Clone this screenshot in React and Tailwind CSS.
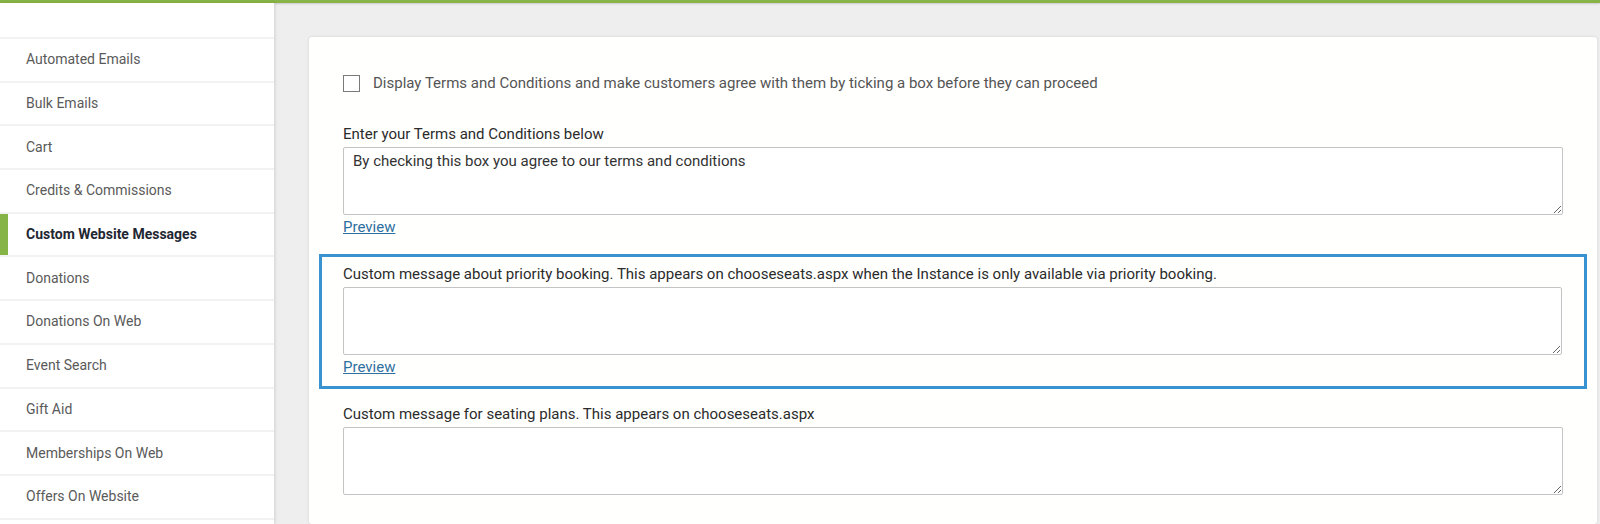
import React from 'react';

const menuItems = [
  'Automated Emails',
  'Bulk Emails',
  'Cart',
  'Credits & Commissions',
  'Custom Website Messages',
  'Donations',
  'Donations On Web',
  'Event Search',
  'Gift Aid',
  'Memberships On Web',
  'Offers On Website',
];

function Field({ label, value = '', preview = true }) {
  return (
    <div>
      <div className="text-[15px] leading-[20px] text-[#2b2b2b]">{label}</div>
      <textarea
        defaultValue={value}
        className="mt-[3px] block w-full h-[68px] border border-[#c4c4c4] rounded-[2px] bg-white px-[9px] py-[3px] text-[15px] leading-[20px] text-[#333] outline-none"
      />
      {preview && (
        <a href="#" className="mt-[2px] block w-fit text-[15px] leading-[20px] text-[#2f6f9f] underline">
          Preview
        </a>
      )}
    </div>
  );
}

export default function App() {
  return (
    <div className="h-[524px] overflow-hidden bg-[#eeeeee]" style={{ fontFamily: 'Roboto, "Liberation Sans", sans-serif' }}>
      {/* top accent bar */}
      <div className="h-[3px] bg-[#86b446] shadow-[0_1px_2px_rgba(0,0,0,0.15)]" />
      <div className="flex h-[521px]">
        {/* Sidebar */}
        <aside className="w-[274px] shrink-0 bg-white pt-[34px] shadow-[1px_0_3px_rgba(0,0,0,0.12)] z-10">
          <ul className="border-t-2 border-[#f2f2f2]">
            {menuItems.map((item) => {
              const active = item === 'Custom Website Messages';
              return (
                <li
                  key={item}
                  className={`relative flex h-[43.7px] items-center border-b-2 border-[#f2f2f2] pl-[26px] text-[14px] ${
                    active ? 'font-bold text-[#1f2733]' : 'text-[#5a5a5a]'
                  }`}
                >
                  {active && <span className="absolute left-0 top-0 bottom-0 w-[8px] bg-[#86b446]" />}
                  {item}
                </li>
              );
            })}
          </ul>
        </aside>

        {/* Main */}
        <main className="flex-1 pl-[35px] pr-[3px] pt-[34px]">
          <div className="h-full rounded-[3px] bg-[#fffffe] px-[10px] pt-[36px] shadow-[0_0_3px_rgba(0,0,0,0.12)]">
            <div className="px-[24px]">
              <label className="flex h-[20px] items-center gap-[13px] text-[15px] text-[#555]">
                <span className="block h-[17px] w-[17px] border border-[#7a7a7a] bg-white" />
                Display Terms and Conditions and make customers agree with them by ticking a box before they can proceed
              </label>
            </div>

            <div className="mt-[31px] px-[24px]">
              <Field
                label="Enter your Terms and Conditions below"
                value="By checking this box you agree to our terms and conditions"
              />
            </div>

            <div className="mt-[17px] border-[3px] border-[#3893d0] pl-[21px] pr-[22px] pt-[7px] pb-[9px]">
              <Field label="Custom message about priority booking. This appears on chooseseats.aspx when the Instance is only available via priority booking." />
            </div>

            <div className="mt-[15px] px-[24px]">
              <Field label="Custom message for seating plans. This appears on chooseseats.aspx" preview={false} />
            </div>
          </div>
        </main>
      </div>
    </div>
  );
}
